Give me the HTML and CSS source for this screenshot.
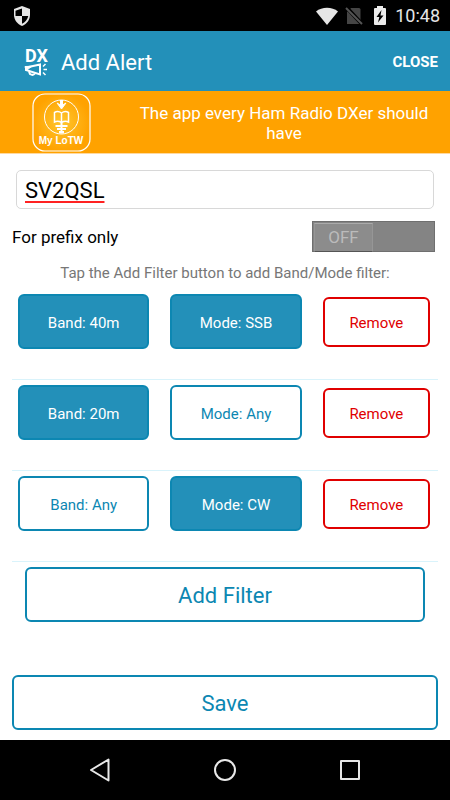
FILE: index.html
```html
<!DOCTYPE html>
<html lang="en">
<head>
    <meta charset="UTF-8">
    <meta name="viewport" content="width=device-width, initial-scale=1.0">
    <title>Add Alert</title>
    <link rel="stylesheet" href="styles.css">
</head>
<body>
    <div class="status">
        <svg class="shield" width="18" height="20" viewBox="0 0 18 20">
            <path d="M9 0 L17 3 V9 C17 14 13.500 18 9 20 C4.500 18 1 14 1 9 V3 Z" fill="#e6e6e6"/>
            <path d="M9 2.500 V10 H15.300 C14.500 13.500 12 16.500 9 17.700 V10 H2.500 V4.800 Z" fill="#000"/>
        </svg>
        <svg width="24" height="18" viewBox="0 0 24 18">
            <path d="M12 18 L1 4.500 C7 -0.500 17 -0.500 23 4.500 Z" fill="#e6e6e6"/>
        </svg>
        <svg class="sim" width="18" height="18" viewBox="0 0 18 18">
            <path d="M6 1 H14 Q15.500 1 15.500 2.500 V17 H2 V5 Z" fill="#454545"/>
            <path d="M1 0 L17 17" stroke="#000" stroke-width="4"/>
            <path d="M1 1 L17 17" stroke="#555" stroke-width="2"/>
        </svg>
        <svg class="battery" width="14" height="20" viewBox="0 0 14 20">
            <path d="M4 0 H10 V2 H12 Q13 2 13 3 V18 Q13 19 12 19 H2 Q1 19 1 18 V3 Q1 2 2 2 H4 Z" fill="#ececec"/>
            <path d="M8.500 4 L3.500 11 H6.300 L5 16.500 L10.500 9.500 H7.500 Z" fill="#000"/>
        </svg>
        <span>10:48</span>
    </div>

    <header class="header">
        <svg width="26" height="34" viewBox="0 0 26 34" fill="none" stroke="#fff">
            <text class="logo-text" x="1" y="17">DX</text>
            <path d="M2 22 V25 L16 29.500 V19.500 L2 22.500" stroke-width="2"/>
            <path d="M1 21.500 L8 21.300 L2 25.500 Z" fill="#fff" stroke-width="1"/>
            <path d="M5 26.500 L6 29 Q9 31 11 28.500" stroke-width="2"/>
            <path d="M19 21.500 L21.500 19 M19.500 24.500 H23 M19 27.500 L21.500 30" stroke-width="1.500"/>
        </svg>
        <h1>Add Alert</h1>
        <button class="close">CLOSE</button>
    </header>

    <a class="banner" href="#">
        <svg width="60" height="60" viewBox="0 0 60 60" fill="none" stroke="#fff">
            <defs>
                <radialGradient id="glow">
                    <stop offset="0" stop-color="#ffc62e"/>
                    <stop offset="1" stop-color="#ffa200"/>
                </radialGradient>
            </defs>
            <rect x="1" y="1" width="57" height="57" rx="12" fill="url(#glow)" stroke-width="1.200"/>
            <circle cx="29.500" cy="24" r="17"/>
            <path d="M29.500 7 V12" stroke-width="3"/>
            <path d="M25 10 L29.500 16 L34 10 L30.500 12 H28.500 Z" fill="#fff"/>
            <path d="M29.500 20 Q26 17.500 22.500 19.500 V29 Q26 27.500 29.500 29.500 Q33 27.500 36.500 29 V19.500 Q33 17.500 29.500 20 V29.500" stroke-width="1.500"/>
            <path d="M23.500 33 H35.500 M25 36 H34 M27 39 H32" stroke-width="2"/>
            <path d="M29.500 30 V40.500" stroke-width="2"/>
            <text class="badge-text" x="29" y="51" text-anchor="middle">My LoTW</text>
        </svg>
        <span class="banner-text">The app every Ham Radio DXer should have</span>
    </a>

    <main class="main">
        <input class="call" type="text" value="SV2QSL" aria-label="Callsign" spellcheck="false">

        <div class="prefix">
            <label for="prefixOnly">For prefix only</label>
            <div class="switch">
                <input type="checkbox" role="switch" id="prefixOnly">
                <span class="thumb">OFF</span>
            </div>
        </div>

        <p class="hint">Tap the Add Filter button to add Band/Mode filter:</p>

        <div class="filter">
            <button class="btn on">Band: 40m</button>
            <button class="btn on">Mode: SSB</button>
            <button class="btn remove">Remove</button>
        </div>
        <div class="filter">
            <button class="btn on">Band: 20m</button>
            <button class="btn">Mode: Any</button>
            <button class="btn remove">Remove</button>
        </div>
        <div class="filter">
            <button class="btn">Band: Any</button>
            <button class="btn on">Mode: CW</button>
            <button class="btn remove">Remove</button>
        </div>

        <button class="btn big add">Add Filter</button>
        <button class="btn big save">Save</button>
    </main>

    <nav class="nav">
        <button aria-label="Back">
            <svg width="24" height="26" viewBox="0 0 24 26"><path d="M20.500 2.500 V23.500 L3 13 Z"/></svg>
        </button>
        <button aria-label="Home">
            <svg width="24" height="26" viewBox="0 0 24 26"><circle cx="12" cy="13" r="10"/></svg>
        </button>
        <button aria-label="Recent apps">
            <svg width="24" height="26" viewBox="0 0 24 26"><rect x="3" y="4" width="18" height="18"/></svg>
        </button>
    </nav>
</body>
</html>
```

FILE: styles.css
```css
* {
    box-sizing: border-box;
}

body {
    margin: 0;
    min-height: 100vh;
    display: flex;
    flex-direction: column;
    background-color: #fff;
    color: #000;
    font-family: Roboto, sans-serif;
    font-size: 16px;
}

button {
    margin: 0;
    padding: 0;
    border: none;
    background: none;
    font-family: inherit;
    cursor: pointer;
}

svg {
    display: block;
    flex: none;
}

/* phone status bar */
.status {
    display: flex;
    align-items: center;
    height: 31px;
    padding: 0 10px 0 13px;
    background-color: #000;
    color: #e6e6e6;
    font-size: 18px;
}

.shield {
    margin-right: auto;
}

.sim {
    margin: 0 10px 0 6px;
}

.battery {
    margin-right: 8px;
}

.header {
    display: flex;
    align-items: center;
    height: 60px;
    padding: 2px 12px 0 24px;
    background-color: #2390b9;
    color: #fff;
}

.header h1 {
    flex: 1;
    margin: 0 0 0 11px;
    font-size: 22px;
    font-weight: 400;
}

.logo-text {
    fill: #fff;
    stroke: none;
    font-family: "Liberation Sans Narrow", Roboto, sans-serif;
    font-size: 18px;
    font-weight: 700;
}

.close {
    color: #fff;
    font-size: 15px;
    font-weight: 700;
}

.banner {
    display: flex;
    align-items: center;
    height: 63px;
    padding: 2px 16px 0 32px;
    border-bottom: 1px solid #ffd9a0;
    background-color: #ffa200;
    color: #fff;
    text-decoration: none;
}

.banner-text {
    flex: 1;
    margin-left: 42px;
    font-size: 17px;
    line-height: 20px;
    text-align: center;
}

.badge-text {
    fill: #fff;
    stroke: none;
    font-family: "Liberation Sans", sans-serif;
    font-size: 10px;
    font-weight: 700;
}

.main {
    flex: 1;
    display: flex;
    flex-direction: column;
    padding: 16px 12px 10px;
}

.call {
    height: 39px;
    margin: 0 4px;
    padding: 2px 8px 0;
    border: 1px solid #d8d8d8;
    border-radius: 5px;
    background-color: #fff;
    color: #000;
    font-family: inherit;
    font-size: 22px;
    text-decoration: underline 2px #f22;
    text-decoration-skip-ink: none;
    text-underline-offset: 3px;
}

.prefix {
    display: flex;
    align-items: center;
    justify-content: space-between;
    margin-top: 12px;
    padding-right: 3px;
    font-size: 17px;
}

.switch {
    display: grid;
    width: 123px;
    height: 31px;
    border: 1px solid #6f6f6f;
    background-color: #848484;
}

.switch input {
    grid-area: 1 / 1;
    appearance: none;
    margin: 0;
}

.thumb {
    grid-area: 1 / 1;
    width: 59px;
    margin: 1px;
    border: 1px solid #969696;
    border-top-color: #aaa;
    border-bottom: 1px solid #555;
    background-color: #8c8c8c;
    color: #bbb;
    line-height: 27px;
    text-align: center;
    pointer-events: none;
}

.hint {
    margin: 11px 0 6px;
    color: #777;
    font-size: 15px;
    line-height: 20px;
    text-align: center;
}

.filter {
    display: grid;
    grid-template-columns: 131fr 131fr 107fr;
    align-items: center;
    column-gap: 21px;
    padding: 5px 8px 30px 6px;
    border-bottom: 1px solid #d9f3fb;
}

.btn {
    height: 55px;
    padding-top: 2px;
    border: 2px solid #0c87b2;
    border-radius: 6px;
    color: #0c87b2;
    font-size: 15px;
}

.on {
    background-color: #2390b9;
    color: #fff;
}

.remove {
    height: 50px;
    border-color: #e00000;
    color: #e00000;
}

.big {
    font-size: 22px;
}

.add {
    margin: 5px 13px 24px;
}

.save {
    margin-top: auto;
}

/* android navigation */
.nav {
    display: flex;
    height: 60px;
    padding: 0 37px;
    background-color: #000;
}

.nav button {
    flex: 1;
    display: flex;
    align-items: center;
    justify-content: center;
}

.nav svg {
    fill: none;
    stroke: #e8e8e8;
    stroke-width: 2;
    stroke-linejoin: round;
}
```
